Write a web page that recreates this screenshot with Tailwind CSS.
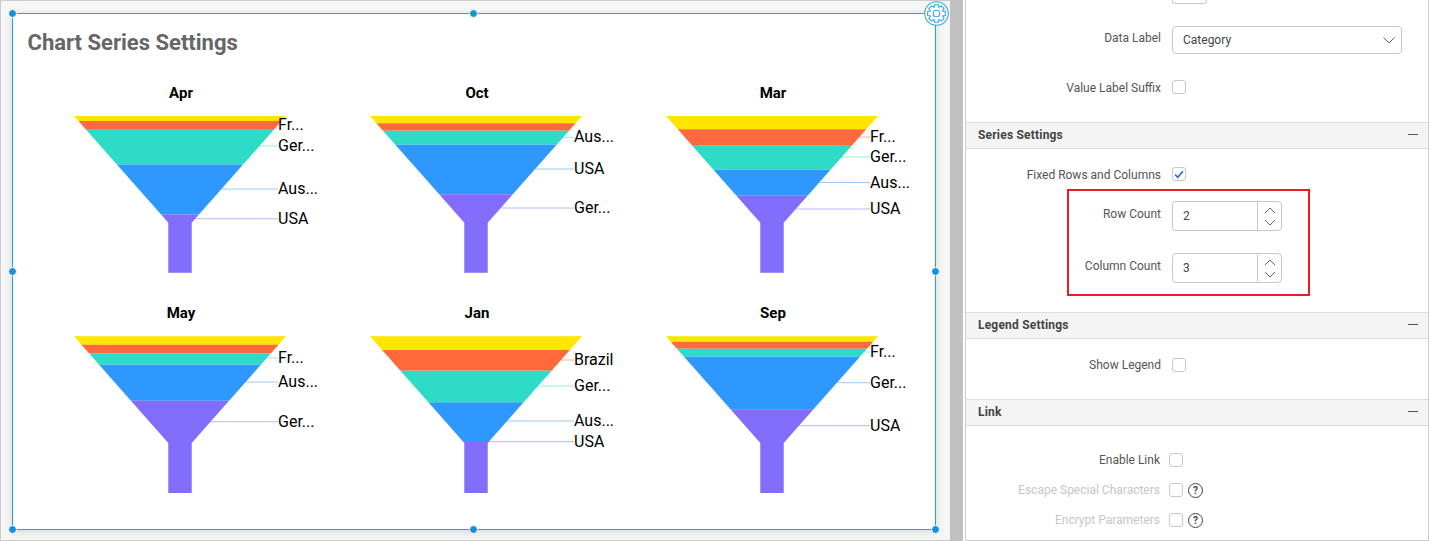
<!DOCTYPE html>
<html lang="en">
<head>
    <meta charset="UTF-8">
    <title>Chart Series Settings</title>
    <script src="https://cdn.jsdelivr.net/npm/@tailwindcss/browser@4"></script>
</head>
<body class="font-['Roboto',sans-serif] bg-white">
<div class="flex w-[1429px] h-[541px] overflow-hidden">

    <!--designer area with the widget-->
    <div class="w-[950px] h-[541px] shrink-0 bg-[#f6f6f6] border-l border-t border-b border-[#cccccc] pl-[11px] pt-[12px]">
        <div class="relative w-[924px] h-[517px] bg-white border border-[#1ba8e2] shadow-[0_2px_8px_rgba(0,0,0,0.12)]">
            <h1 class="pl-[14.5px] pt-[15px] mb-[23px] text-[22px] leading-[28px] font-bold text-[#666666]">Chart Series Settings</h1>
            <div id="charts" class="grid grid-cols-[296px_296px_296px] grid-rows-[220px_220px] pl-[19px]"></div>

            <!--resize handles-->
            <span class="absolute left-[-5px] top-[-5px] size-[9px] rounded-full bg-[#1b8fd8] border border-white"></span>
            <span class="absolute left-[456px] top-[-5px] size-[9px] rounded-full bg-[#1b8fd8] border border-white"></span>
            <span class="absolute left-[-5px] top-[253px] size-[9px] rounded-full bg-[#1b8fd8] border border-white"></span>
            <span class="absolute left-[918px] top-[253px] size-[9px] rounded-full bg-[#1b8fd8] border border-white"></span>
            <span class="absolute left-[-5px] top-[511px] size-[9px] rounded-full bg-[#1b8fd8] border border-white"></span>
            <span class="absolute left-[456px] top-[511px] size-[9px] rounded-full bg-[#1b8fd8] border border-white"></span>
            <span class="absolute left-[918px] top-[511px] size-[9px] rounded-full bg-[#1b8fd8] border border-white"></span>

            <!--gear button-->
            <svg class="absolute left-[910.5px] top-[-13px]" width="25" height="25" viewBox="0 0 24 24">
                <circle cx="12" cy="12" r="11.3" fill="#ffffff" stroke="#2aa5e4" stroke-width="1"/>
                <polygon id="gearShape" fill="none" stroke="#2aa5e4" stroke-width="1"/>
                <circle cx="12" cy="12" r="3.2" fill="none" stroke="#2aa5e4" stroke-width="1"/>
            </svg>
        </div>
    </div>

    <!--splitter-->
    <div class="w-[13px] shrink-0 bg-[#c1c1c1]"></div>
    <div class="w-[2px] shrink-0 bg-white"></div>

    <!--properties panel-->
    <div class="relative w-[464px] h-[541px] shrink-0 bg-white border-l border-r border-b border-[#cccccc] text-[12px] text-[#555555]">

        <div class="h-[26px] pl-[206px]">
            <div class="w-[35px] h-[4px] border border-t-0 border-[#c8c8c8] rounded-b-[3px]"></div>
        </div>

        <div class="flex items-center h-[28px]">
            <div class="w-[195px] text-right mb-[4px]">Data Label</div>
            <div class="ml-[11px] w-[230px] h-[28px] flex items-center justify-between pl-[10px] pr-[6px] border border-[#c8c8c8] rounded-[4px] text-[#444444]">
                <span>Category</span>
                <svg width="12" height="7" viewBox="0 0 12 7" fill="none" stroke="#666666" stroke-width="1"><path d="M0.5 0.5l5.5 5.5 5.5-5.5"/></svg>
            </div>
        </div>

        <div class="flex items-center h-[14px] mt-[26px]">
            <div class="w-[195px] text-right mt-[1px]">Value Label Suffix</div>
            <div class="ml-[11px] size-[14px] border border-[#c8c8c8] rounded-[3px]"></div>
        </div>

        <div class="flex items-center justify-between h-[27px] mt-[28px] pl-[12px] pr-[10px] pb-[2px] bg-[#f4f4f4] border-t border-b border-[#dddddd]">
            <span class="font-bold text-[#444444] tracking-[0.2px]">Series Settings</span>
            <span class="w-[10px] h-[1px] bg-[#555555]"></span>
        </div>

        <div class="flex items-center h-[14px] mt-[18px]">
            <div class="w-[195px] text-right mt-[1px]">Fixed Rows and Columns</div>
            <div class="ml-[11px] size-[14px] flex items-center justify-center border border-[#c8c8c8] rounded-[3px]">
                <svg width="10" height="9" viewBox="0 0 10 9" fill="none" stroke="#2f62e6" stroke-width="1.6"><path d="M1 4.5l2.8 2.8L9 1.2"/></svg>
            </div>
        </div>

        <div class="flex items-center h-[30px] mt-[20px]">
            <div class="w-[195px] text-right mb-[5px]">Row Count</div>
            <div class="ml-[11px] w-[110px] h-[30px] flex border border-[#c8c8c8] rounded-[4px]">
                <div class="flex-1 flex items-center pl-[10px] text-[#444444]">2</div>
                <div class="w-[24px] flex flex-col items-center justify-center gap-[5px] border-l border-[#c8c8c8]">
                    <svg width="12" height="7" viewBox="0 0 12 7" fill="none" stroke="#666666"><path d="M1 6l5-5 5 5"/></svg>
                    <svg width="12" height="7" viewBox="0 0 12 7" fill="none" stroke="#666666"><path d="M1 1l5 5 5-5"/></svg>
                </div>
            </div>
        </div>

        <div class="flex items-center h-[30px] mt-[22px]">
            <div class="w-[195px] text-right mb-[5px]">Column Count</div>
            <div class="ml-[11px] w-[110px] h-[30px] flex border border-[#c8c8c8] rounded-[4px]">
                <div class="flex-1 flex items-center pl-[10px] text-[#444444]">3</div>
                <div class="w-[24px] flex flex-col items-center justify-center gap-[5px] border-l border-[#c8c8c8]">
                    <svg width="12" height="7" viewBox="0 0 12 7" fill="none" stroke="#666666"><path d="M1 6l5-5 5 5"/></svg>
                    <svg width="12" height="7" viewBox="0 0 12 7" fill="none" stroke="#666666"><path d="M1 1l5 5 5-5"/></svg>
                </div>
            </div>
        </div>

        <div class="flex items-center justify-between h-[27px] mt-[29px] pl-[12px] pr-[10px] pb-[2px] bg-[#f4f4f4] border-t border-b border-[#dddddd]">
            <span class="font-bold text-[#444444] tracking-[0.2px]">Legend Settings</span>
            <span class="w-[10px] h-[1px] bg-[#555555]"></span>
        </div>

        <div class="flex items-center h-[14px] mt-[19px]">
            <div class="w-[195px] text-right">Show Legend</div>
            <div class="ml-[11px] size-[14px] border border-[#c8c8c8] rounded-[3px]"></div>
        </div>

        <div class="flex items-center justify-between h-[27px] mt-[27px] pl-[12px] pr-[10px] pb-[2px] bg-[#f4f4f4] border-t border-b border-[#dddddd]">
            <span class="font-bold text-[#444444] tracking-[0.2px]">Link</span>
            <span class="w-[10px] h-[1px] bg-[#555555]"></span>
        </div>

        <div class="flex items-center h-[14px] mt-[27px]">
            <div class="w-[194px] text-right">Enable Link</div>
            <div class="ml-[9px] size-[14px] border border-[#c8c8c8] rounded-[3px]"></div>
        </div>

        <div class="flex items-center h-[14px] mt-[16px]">
            <div class="w-[194px] text-right text-[#c6c6c6]">Escape Special Characters</div>
            <div class="ml-[9px] size-[14px] border border-[#c8c8c8] rounded-[3px]"></div>
            <div class="ml-[5px] size-[15px] flex items-center justify-center rounded-full border border-[#444444] text-[10px] font-bold text-[#444444]">?</div>
        </div>

        <div class="flex items-center h-[14px] mt-[16px]">
            <div class="w-[194px] text-right text-[#c6c6c6]">Encrypt Parameters</div>
            <div class="ml-[9px] size-[14px] border border-[#c8c8c8] rounded-[3px]"></div>
            <div class="ml-[5px] size-[15px] flex items-center justify-center rounded-full border border-[#444444] text-[10px] font-bold text-[#444444]">?</div>
        </div>

        <!--red highlight over the two count rows-->
        <div class="absolute left-[101px] top-[189px] w-[243px] h-[107px] border-[2px] border-[#ed1c24]"></div>
    </div>
</div>

<script>
    const colors = ["#ffe600", "#ff6a3d", "#2ddbc6", "#2f98ff", "#826cfa"];

    // cuts: y of each band's top inside the 296x220 cell, labels: [text, line y, band colour]
    const chartData = [
        { title: "Apr", cuts: [36, 41, 49, 84.5, 134.5], labels: [["Fr...", 45, 1], ["Ger...", 66, 2], ["Aus...", 109, 3], ["USA", 138.7, 4]] },
        { title: "Oct", cuts: [36, 43.3, 50.7, 64.7, 114.3], labels: [["Aus...", 57.3, 2], ["USA", 89, 3], ["Ger...", 128, 4]] },
        { title: "Mar", cuts: [36, 49.3, 65.7, 89.7, 115.7], labels: [["Fr...", 57, 1], ["Ger...", 77, 2], ["Aus...", 102.5, 3], ["USA", 129, 4]] },
        { title: "May", cuts: [36.3, 44.7, 53.3, 64.7, 100.7], labels: [["Fr...", 58, 2], ["Aus...", 82, 3], ["Ger...", 121.7, 4]] },
        { title: "Jan", cuts: [36.3, 50, 70.7, 102.3, 141], labels: [["Brazil", 60, 1], ["Ger...", 86, 2], ["Aus...", 121, 3], ["USA", 141.7, 4]] },
        { title: "Sep", cuts: [36.3, 41.7, 48.7, 56.7, 109.3], labels: [["Fr...", 52, 2], ["Ger...", 82.7, 3], ["USA", 125.7, 4]] }
    ];

    function halfWidth(y, top) {
        return Math.max(11.7, 106 - 0.884 * (y - top));
    }

    function buildChart(chart) {
        const top = chart.cuts[0];
        const neck = top + 106.7;
        const bottom = top + 156.7;
        let out = `<text x="149" y="18" text-anchor="middle" font-size="15" font-weight="700" fill="#000000">${chart.title}</text>`;

        chart.cuts.forEach((y, i) => {
            const end = i < 4 ? chart.cuts[i + 1] : bottom;
            const pts = [[148 - halfWidth(y, top), y], [148 + halfWidth(y, top), y]];
            // last band bends at the neck
            if (y < neck && end > neck) pts.push([148 + 11.7, neck]);
            pts.push([148 + halfWidth(end, top), end], [148 - halfWidth(end, top), end]);
            if (y < neck && end > neck) pts.push([148 - 11.7, neck]);
            out += `<polygon points="${pts.map(p => p.join(",")).join(" ")}" fill="${colors[i]}"/>`;
        });

        chart.labels.forEach(([text, y, band]) => {
            const edge = 148 + halfWidth(y, top);
            out += `<line x1="${edge}" y1="${y}" x2="246" y2="${y}" stroke="${colors[band]}" stroke-opacity="0.5"/>`;
            out += `<text x="246" y="${y + 5}" font-size="16" fill="#000000">${text}</text>`;
        });
        return `<svg width="296" height="220" viewBox="0 0 296 220">${out}</svg>`;
    }

    document.getElementById("charts").innerHTML = chartData.map(buildChart).join("");

    // 8 tooth gear outline for the settings button
    const gearPts = [];
    for (let i = 0; i < 8; i++) {
        const a = i * Math.PI / 4;
        [[-0.39, 6.2], [-0.22, 8.7], [0.22, 8.7], [0.39, 6.2]].forEach(([d, r]) => {
            gearPts.push((12 + r * Math.cos(a + d)).toFixed(2) + "," + (12 + r * Math.sin(a + d)).toFixed(2));
        });
    }
    document.getElementById("gearShape").setAttribute("points", gearPts.join(" "));
</script>
</body>
</html>
